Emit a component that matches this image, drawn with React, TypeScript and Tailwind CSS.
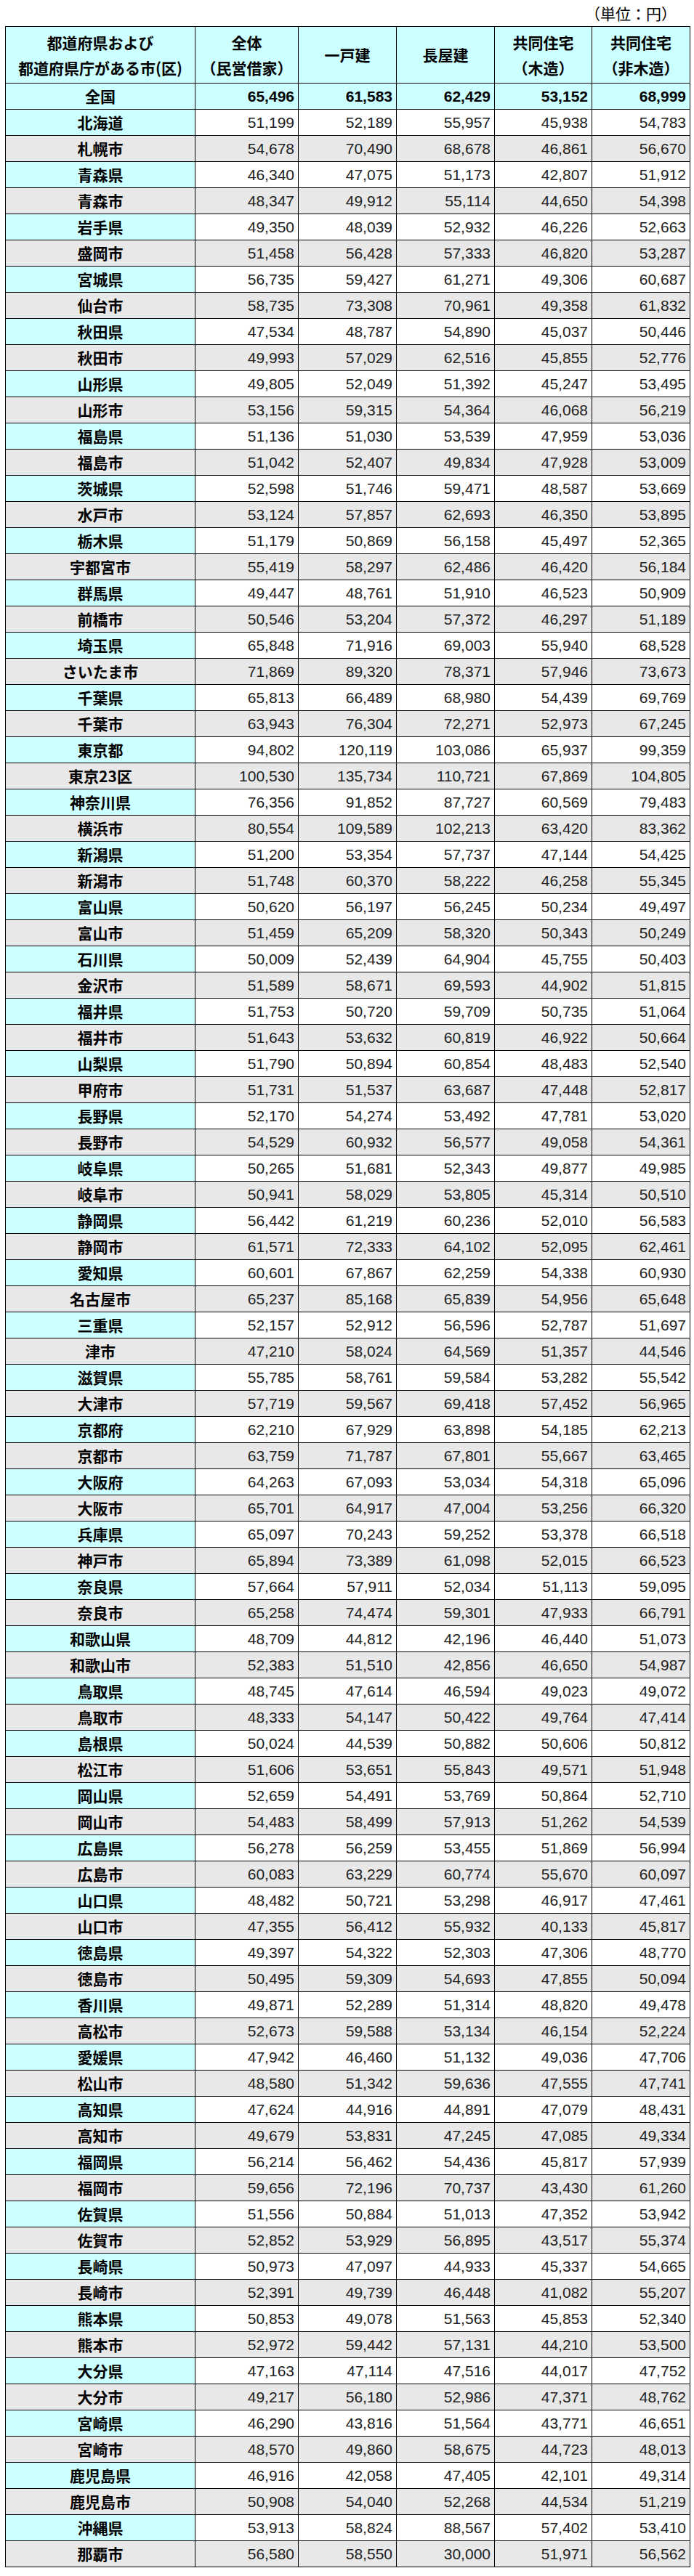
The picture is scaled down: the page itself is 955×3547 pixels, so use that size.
const rows: string[] = [
  "北海道,51,199,52,189,55,957,45,938,54,783",
  "札幌市,54,678,70,490,68,678,46,861,56,670",
  "青森県,46,340,47,075,51,173,42,807,51,912",
  "青森市,48,347,49,912,55,114,44,650,54,398",
  "岩手県,49,350,48,039,52,932,46,226,52,663",
  "盛岡市,51,458,56,428,57,333,46,820,53,287",
  "宮城県,56,735,59,427,61,271,49,306,60,687",
  "仙台市,58,735,73,308,70,961,49,358,61,832",
  "秋田県,47,534,48,787,54,890,45,037,50,446",
  "秋田市,49,993,57,029,62,516,45,855,52,776",
  "山形県,49,805,52,049,51,392,45,247,53,495",
  "山形市,53,156,59,315,54,364,46,068,56,219",
  "福島県,51,136,51,030,53,539,47,959,53,036",
  "福島市,51,042,52,407,49,834,47,928,53,009",
  "茨城県,52,598,51,746,59,471,48,587,53,669",
  "水戸市,53,124,57,857,62,693,46,350,53,895",
  "栃木県,51,179,50,869,56,158,45,497,52,365",
  "宇都宮市,55,419,58,297,62,486,46,420,56,184",
  "群馬県,49,447,48,761,51,910,46,523,50,909",
  "前橋市,50,546,53,204,57,372,46,297,51,189",
  "埼玉県,65,848,71,916,69,003,55,940,68,528",
  "さいたま市,71,869,89,320,78,371,57,946,73,673",
  "千葉県,65,813,66,489,68,980,54,439,69,769",
  "千葉市,63,943,76,304,72,271,52,973,67,245",
  "東京都,94,802,120,119,103,086,65,937,99,359",
  "東京23区,100,530,135,734,110,721,67,869,104,805",
  "神奈川県,76,356,91,852,87,727,60,569,79,483",
  "横浜市,80,554,109,589,102,213,63,420,83,362",
  "新潟県,51,200,53,354,57,737,47,144,54,425",
  "新潟市,51,748,60,370,58,222,46,258,55,345",
  "富山県,50,620,56,197,56,245,50,234,49,497",
  "富山市,51,459,65,209,58,320,50,343,50,249",
  "石川県,50,009,52,439,64,904,45,755,50,403",
  "金沢市,51,589,58,671,69,593,44,902,51,815",
  "福井県,51,753,50,720,59,709,50,735,51,064",
  "福井市,51,643,53,632,60,819,46,922,50,664",
  "山梨県,51,790,50,894,60,854,48,483,52,540",
  "甲府市,51,731,51,537,63,687,47,448,52,817",
  "長野県,52,170,54,274,53,492,47,781,53,020",
  "長野市,54,529,60,932,56,577,49,058,54,361",
  "岐阜県,50,265,51,681,52,343,49,877,49,985",
  "岐阜市,50,941,58,029,53,805,45,314,50,510",
  "静岡県,56,442,61,219,60,236,52,010,56,583",
  "静岡市,61,571,72,333,64,102,52,095,62,461",
  "愛知県,60,601,67,867,62,259,54,338,60,930",
  "名古屋市,65,237,85,168,65,839,54,956,65,648",
  "三重県,52,157,52,912,56,596,52,787,51,697",
  "津市,47,210,58,024,64,569,51,357,44,546",
  "滋賀県,55,785,58,761,59,584,53,282,55,542",
  "大津市,57,719,59,567,69,418,57,452,56,965",
  "京都府,62,210,67,929,63,898,54,185,62,213",
  "京都市,63,759,71,787,67,801,55,667,63,465",
  "大阪府,64,263,67,093,53,034,54,318,65,096",
  "大阪市,65,701,64,917,47,004,53,256,66,320",
  "兵庫県,65,097,70,243,59,252,53,378,66,518",
  "神戸市,65,894,73,389,61,098,52,015,66,523",
  "奈良県,57,664,57,911,52,034,51,113,59,095",
  "奈良市,65,258,74,474,59,301,47,933,66,791",
  "和歌山県,48,709,44,812,42,196,46,440,51,073",
  "和歌山市,52,383,51,510,42,856,46,650,54,987",
  "鳥取県,48,745,47,614,46,594,49,023,49,072",
  "鳥取市,48,333,54,147,50,422,49,764,47,414",
  "島根県,50,024,44,539,50,882,50,606,50,812",
  "松江市,51,606,53,651,55,843,49,571,51,948",
  "岡山県,52,659,54,491,53,769,50,864,52,710",
  "岡山市,54,483,58,499,57,913,51,262,54,539",
  "広島県,56,278,56,259,53,455,51,869,56,994",
  "広島市,60,083,63,229,60,774,55,670,60,097",
  "山口県,48,482,50,721,53,298,46,917,47,461",
  "山口市,47,355,56,412,55,932,40,133,45,817",
  "徳島県,49,397,54,322,52,303,47,306,48,770",
  "徳島市,50,495,59,309,54,693,47,855,50,094",
  "香川県,49,871,52,289,51,314,48,820,49,478",
  "高松市,52,673,59,588,53,134,46,154,52,224",
  "愛媛県,47,942,46,460,51,132,49,036,47,706",
  "松山市,48,580,51,342,59,636,47,555,47,741",
  "高知県,47,624,44,916,44,891,47,079,48,431",
  "高知市,49,679,53,831,47,245,47,085,49,334",
  "福岡県,56,214,56,462,54,436,45,817,57,939",
  "福岡市,59,656,72,196,70,737,43,430,61,260",
  "佐賀県,51,556,50,884,51,013,47,352,53,942",
  "佐賀市,52,852,53,929,56,895,43,517,55,374",
  "長崎県,50,973,47,097,44,933,45,337,54,665",
  "長崎市,52,391,49,739,46,448,41,082,55,207",
  "熊本県,50,853,49,078,51,563,45,853,52,340",
  "熊本市,52,972,59,442,57,131,44,210,53,500",
  "大分県,47,163,47,114,47,516,44,017,47,752",
  "大分市,49,217,56,180,52,986,47,371,48,762",
  "宮崎県,46,290,43,816,51,564,43,771,46,651",
  "宮崎市,48,570,49,860,58,675,44,723,48,013",
  "鹿児島県,46,916,42,058,47,405,42,101,49,314",
  "鹿児島市,50,908,54,040,52,268,44,534,51,219",
  "沖縄県,53,913,58,824,88,567,57,402,53,410",
  "那覇市,56,580,58,550,30,000,51,971,56,562",
];

// "name,a,b,..." -> name + five comma-grouped numbers
const parse = (line: string) => {
  const [name, ...parts] = line.split(",");
  const nums: string[] = [];
  let cur: string[] = [];
  for (const p of parts) {
    cur.push(p);
    if (cur.length === 2) {
      nums.push(cur.join(","));
      cur = [];
    }
  }
  return { name, nums };
};

const jp = { fontFamily: '"Noto Sans CJK JP", "Noto Sans", sans-serif' };
const num = { fontFamily: '"Liberation Sans", Arial, sans-serif' };

export default function App() {
  return (
    <div className="w-[955px] bg-white pb-[13px] text-black">
      <div
        className="flex h-[36px] items-center justify-end pr-[24px] text-[21px] leading-none"
        style={jp}
      >
        （単位：円）
      </div>
      <table className="ml-[7px] w-[942px] table-fixed border-collapse border border-black">
        <colgroup>
          <col className="w-[261px]" />
          <col className="w-[142px]" />
          <col className="w-[135px]" />
          <col className="w-[135px]" />
          <col className="w-[134px]" />
          <col className="w-[135px]" />
        </colgroup>
        <thead>
          <tr className="h-[78px] bg-[#ccffff] text-[21px] font-bold leading-[35px]" style={jp}>
            <th className="border border-black p-0 font-bold">
              都道府県および
              <br />
              都道府県庁がある市(区)
            </th>
            <th className="border border-black p-0 font-bold">
              全体
              <br />
              （民営借家）
            </th>
            <th className="border border-black p-0 font-bold">一戸建</th>
            <th className="border border-black p-0 font-bold">長屋建</th>
            <th className="border border-black p-0 font-bold">
              共同住宅
              <br />
              （木造）
            </th>
            <th className="border border-black p-0 font-bold">
              共同住宅
              <br />
              （非木造）
            </th>
          </tr>
        </thead>
        <tbody>
          <tr className="h-[36px] bg-[#ccffff]">
            <td className="border border-black p-0 text-center text-[21px] font-bold" style={jp}>
              全国
            </td>
            {["65,496", "61,583", "62,429", "53,152", "68,999"].map((v, i) => (
              <td
                key={i}
                className="border border-black p-0 pr-[5px] text-right text-[21px] font-bold"
                style={num}
              >
                {v}
              </td>
            ))}
          </tr>
          {rows.map((line, idx) => {
            const { name, nums } = parse(line);
            const isCity = idx % 2 === 1;
            return (
              <tr key={name} className={isCity ? "h-[36px] bg-[#e8e8e8]" : "h-[36px] bg-white"}>
                <td
                  className={
                    isCity
                      ? "border border-black p-0 text-center text-[21px] font-bold"
                      : "border border-black bg-[#ccffff] p-0 text-center text-[21px] font-bold"
                  }
                  style={jp}
                >
                  {name}
                </td>
                {nums.map((v, i) => (
                  <td
                    key={i}
                    className="border border-black p-0 pr-[5px] text-right text-[21px] text-[#222]"
                    style={num}
                  >
                    {v}
                  </td>
                ))}
              </tr>
            );
          })}
        </tbody>
      </table>
    </div>
  );
}
